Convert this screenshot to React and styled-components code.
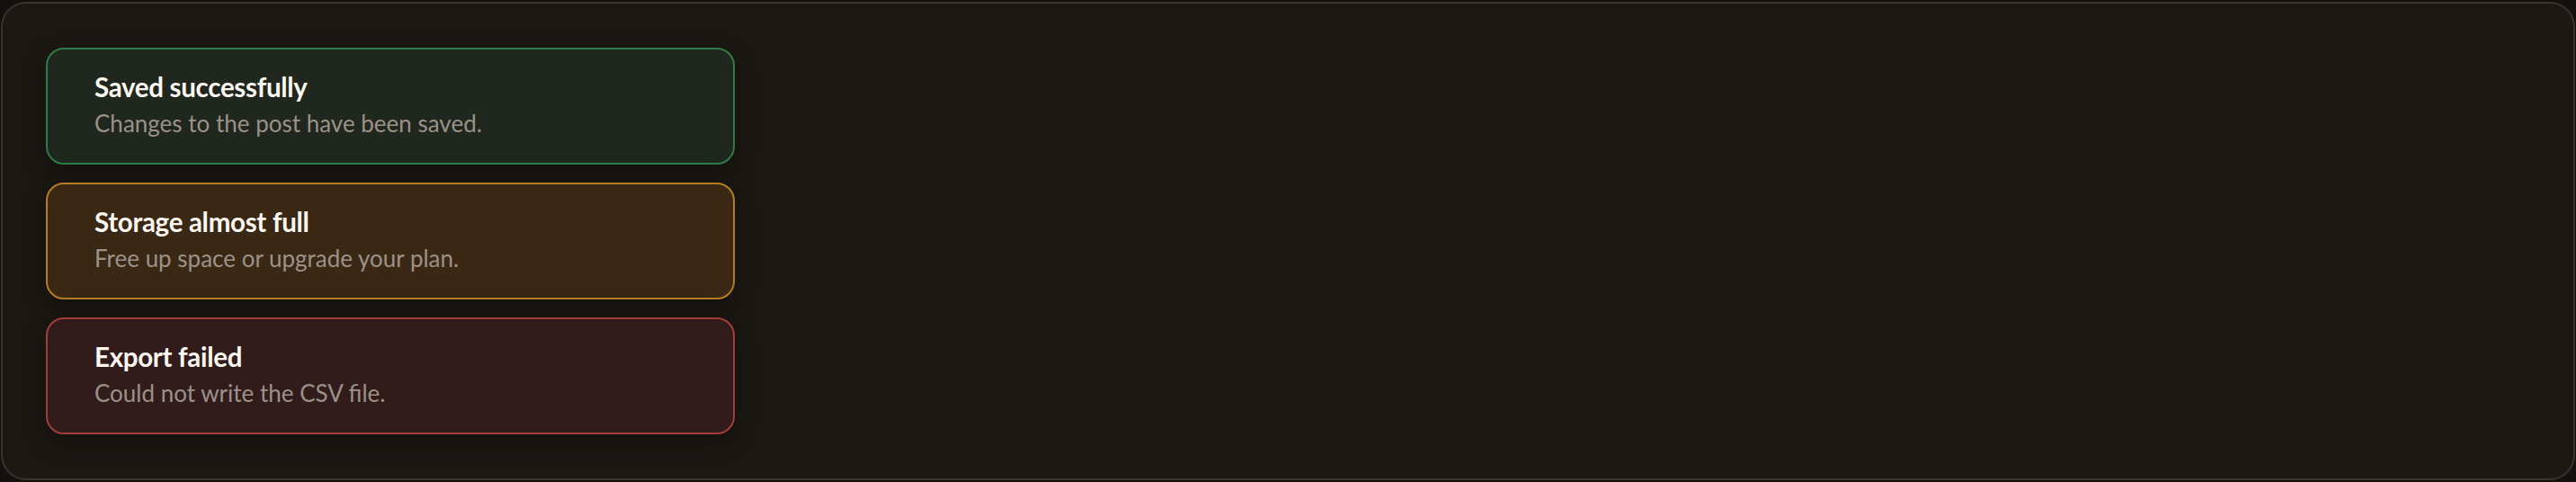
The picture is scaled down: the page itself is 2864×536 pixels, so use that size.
import React from 'react'
import styled, {createGlobalStyle} from 'styled-components'

const GlobalStyle = createGlobalStyle`
    html, body {
        margin: 0;
        padding: 0;
        background: #13100e;
    }
    body {
        font-family: Lato, "Noto Sans", sans-serif;
    }
`

const tones = {
    success: {bg: '#1f271e', border: '#2f7d46'},
    warning: {bg: '#3a2814', border: '#b57c22'},
    danger: {bg: '#321c1b', border: '#a33d39'}
}

const Panel = styled.main`
    box-sizing: border-box;
    height: 532px;
    margin: 2px 1px;
    padding: 49px 48px;
    border: 2px solid #3a332e;
    border-radius: 28px;
    background: #1c1814;
    display: flex;
    flex-direction: column;
    gap: 20px;
`

const Toast = styled.section`
    box-sizing: border-box;
    width: 766px;
    height: 130px;
    padding: 0 52px 4px;
    display: flex;
    flex-direction: column;
    justify-content: center;
    gap: 6px;
    border: 2px solid ${props => tones[props.tone].border};
    border-radius: 20px;
    background: ${props => tones[props.tone].bg};
    box-shadow: 0 8px 28px rgba(0, 0, 0, 0.35);
`

const Title = styled.h3`
    margin: 0;
    font-size: 29.5px;
    line-height: 35px;
    font-weight: 700;
    color: #fbf6ef;
    letter-spacing: -0.3px;
`

const Message = styled.p`
    margin: 0;
    font-size: 26px;
    line-height: 34px;
    font-weight: 400;
    color: #9b9189;
`

const toasts = [
    {tone: 'success', title: 'Saved successfully', message: 'Changes to the post have been saved.'},
    {tone: 'warning', title: 'Storage almost full', message: 'Free up space or upgrade your plan.'},
    {tone: 'danger', title: 'Export failed', message: 'Could not write the CSV file.'}
]

export default function App() {
    return (
        <>
            <GlobalStyle />
            <Panel>
                {toasts.map(t => (
                    <Toast key={t.title} tone={t.tone}>
                        <Title>{t.title}</Title>
                        <Message>{t.message}</Message>
                    </Toast>
                ))}
            </Panel>
        </>
    )
}
